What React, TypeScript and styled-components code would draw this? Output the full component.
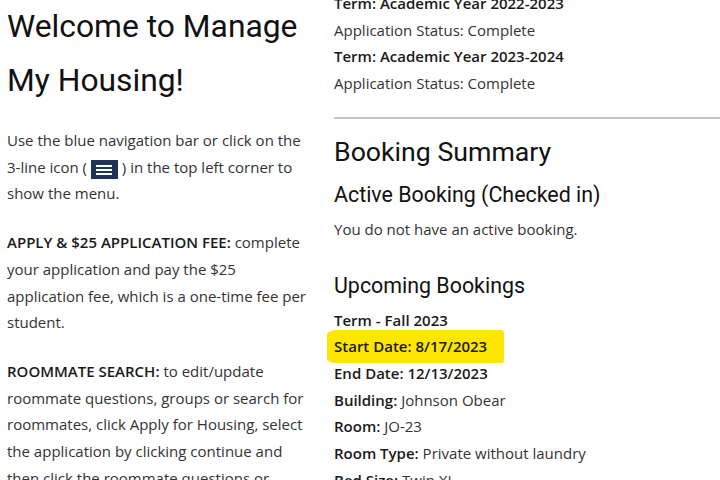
import React from 'react'
import styled, { createGlobalStyle } from 'styled-components'

const GlobalStyle = createGlobalStyle`
  html, body {
    margin: 0;
    padding: 0;
    background: #ffffff;
  }
  body {
    font-family: "Open Sans", "Liberation Sans", sans-serif;
    color: #333333;
  }
`

const Page = styled.div`
  width: 720px;
  height: 480px;
  overflow: hidden;
  display: grid;
  grid-template-columns: 306px 1fr;
  column-gap: 21px;
  padding-left: 7px;
  box-sizing: border-box;
`

const LeftColumn = styled.div`
  display: flex;
  flex-direction: column;
`

const RightColumn = styled.div`
  display: flex;
  flex-direction: column;
  margin-top: -10px;
`

const Title = styled.h1`
  font-family: Roboto, "Liberation Sans", sans-serif;
  font-weight: 400;
  font-size: 31.8px;
  line-height: 54px;
  color: #111111;
  margin: -1px 0 20px;
`

const Paragraph = styled.p`
  font-size: 15px;
  line-height: 26.7px;
  margin: 0 0 22px;
  color: #333333;
`

const Strong = styled.b`
  font-weight: 600;
  color: #1a1a1a;
`

const MenuIcon = styled.span`
  display: inline-flex;
  align-items: center;
  justify-content: center;
  width: 27px;
  height: 19px;
  background: #1c3557;
  vertical-align: -3px;
`

const Line = styled.div<{ $bold?: boolean }>`
  font-size: 15px;
  line-height: 26.7px;
  font-weight: ${p => (p.$bold ? 600 : 400)};
  color: ${p => (p.$bold ? '#1a1a1a' : '#333333')};
`

const Divider = styled.hr`
  border: none;
  height: 2px;
  background: #c4c4c4;
  margin: 20px 0 14px;
  width: 100%;
`

const SectionTitle = styled.h2`
  font-family: Roboto, "Liberation Sans", sans-serif;
  font-weight: 400;
  font-size: 26.7px;
  line-height: 36px;
  color: #111111;
  margin: 1px 0 10px;
`

const SubTitle = styled.h3<{ $gap?: number }>`
  font-family: Roboto, "Liberation Sans", sans-serif;
  font-weight: 400;
  font-size: 21.4px;
  line-height: 30px;
  color: #111111;
  margin: ${p => p.$gap ?? 0}px 0 6px;
`

const Highlight = styled.span`
  position: relative;
  isolation: isolate;
  display: inline-block;
  &::before {
    content: "";
    position: absolute;
    left: -7px;
    right: -17px;
    top: -3px;
    bottom: -3px;
    background: #ffe600;
    border-radius: 10px 4px 2px 7px / 5px 3px 3px 5px;
    z-index: -1;
  }
`

const MenuGlyph = () => (
  <svg width="16" height="12" viewBox="0 0 16 12">
    <rect x="0" y="1" width="16" height="2" fill="#ffffff" />
    <rect x="0" y="5" width="16" height="2" fill="#ffffff" />
    <rect x="0" y="9" width="16" height="2" fill="#ffffff" />
  </svg>
)

const Labeled = ({ label, value }: { label: string; value: string }) => (
  <Line>
    <Strong>{label}:</Strong> {value}
  </Line>
)

export default function App() {
  return (
    <>
      <GlobalStyle />
      <Page>
        <LeftColumn>
          <Title>Welcome to Manage My Housing!</Title>
          <Paragraph>
            Use the blue navigation bar or click on the 3-line icon ({' '}
            <MenuIcon>
              <MenuGlyph />
            </MenuIcon>{' '}
            ) in the top left corner to show the menu.
          </Paragraph>
          <Paragraph>
            <Strong>APPLY &amp; $25 APPLICATION FEE:</Strong> complete your application and pay the $25
            application fee, which is a one-time fee per student.
          </Paragraph>
          <Paragraph>
            <Strong>ROOMMATE SEARCH:</Strong> to edit/update roommate questions, groups or search for
            roommates, click Apply for Housing, select the application by clicking continue and then
            click the roommate questions or groups.
          </Paragraph>
        </LeftColumn>
        <RightColumn>
          <Line $bold>Term: Academic Year 2022-2023</Line>
          <Line>Application Status: Complete</Line>
          <Line $bold>Term: Academic Year 2023-2024</Line>
          <Line>Application Status: Complete</Line>
          <Divider />
          <SectionTitle>Booking Summary</SectionTitle>
          <SubTitle>Active Booking (Checked in)</SubTitle>
          <Line>You do not have an active booking.</Line>
          <SubTitle $gap={28}>Upcoming Bookings</SubTitle>
          <Line $bold>Term - Fall 2023</Line>
          <Line $bold>
            <Highlight>Start Date: 8/17/2023</Highlight>
          </Line>
          <Line $bold>End Date: 12/13/2023</Line>
          <Labeled label="Building" value="Johnson Obear" />
          <Labeled label="Room" value="JO-23" />
          <Labeled label="Room Type" value="Private without laundry" />
          <Labeled label="Bed Size" value="Twin XL" />
        </RightColumn>
      </Page>
    </>
  )
}
